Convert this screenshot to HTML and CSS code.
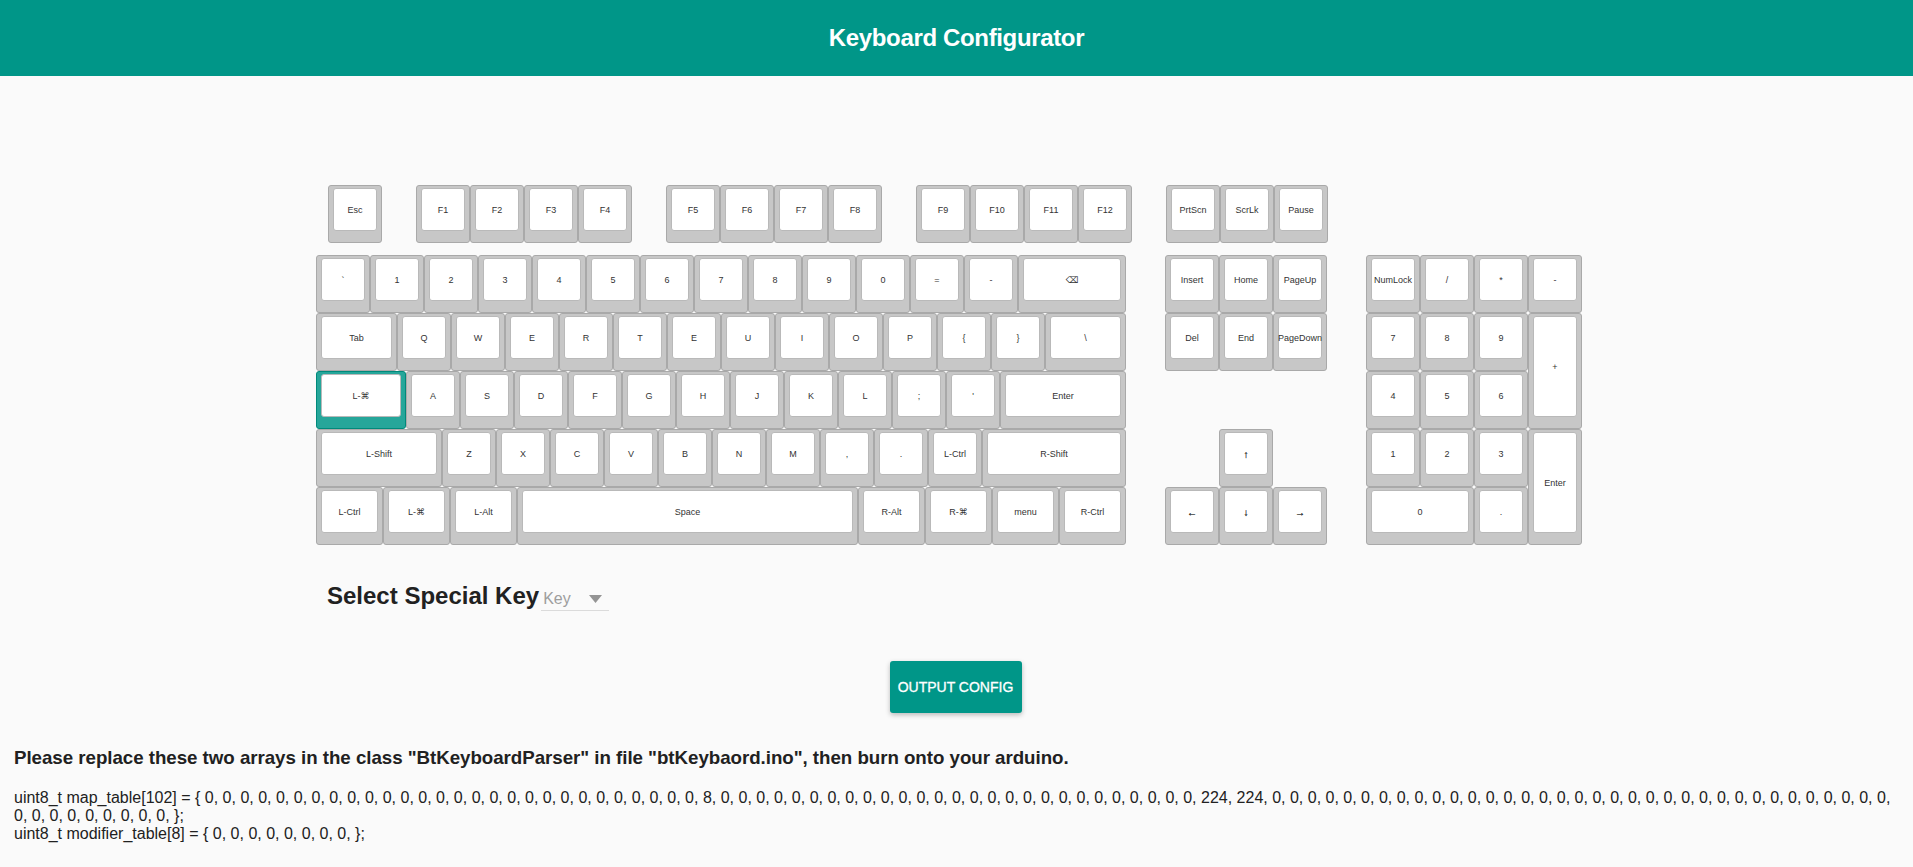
FILE: index.html
```html
<!DOCTYPE html>
<html lang="en">
<head>
<meta charset="utf-8">
<title>Keyboard Configurator</title>
<link rel="stylesheet" href="styles.css">
</head>
<body>
<header class="header"><h1 class="title">Keyboard Configurator</h1></header>
<main>
  <section class="keyboard">
    <div class="functions">
      <div class="row"><div class="key"><span>Esc</span></div></div>
      <div class="row"><div class="key"><span>F1</span></div><div class="key"><span>F2</span></div><div class="key"><span>F3</span></div><div class="key"><span>F4</span></div></div>
      <div class="row"><div class="key"><span>F5</span></div><div class="key"><span>F6</span></div><div class="key"><span>F7</span></div><div class="key"><span>F8</span></div></div>
      <div class="row"><div class="key"><span>F9</span></div><div class="key"><span>F10</span></div><div class="key"><span>F11</span></div><div class="key"><span>F12</span></div></div>
      <div class="row"><div class="key"><span>PrtScn</span></div><div class="key"><span>ScrLk</span></div><div class="key"><span>Pause</span></div></div>
    </div>
    <div class="blocks">
      <div class="main-block">
        <div class="row"><div class="key"><span>`</span></div><div class="key"><span>1</span></div><div class="key"><span>2</span></div><div class="key"><span>3</span></div><div class="key"><span>4</span></div><div class="key"><span>5</span></div><div class="key"><span>6</span></div><div class="key"><span>7</span></div><div class="key"><span>8</span></div><div class="key"><span>9</span></div><div class="key"><span>0</span></div><div class="key"><span>=</span></div><div class="key"><span>-</span></div><div class="key fill symbol"><span>⌫</span></div></div>
        <div class="row"><div class="key tab"><span>Tab</span></div><div class="key"><span>Q</span></div><div class="key"><span>W</span></div><div class="key"><span>E</span></div><div class="key"><span>R</span></div><div class="key"><span>T</span></div><div class="key"><span>E</span></div><div class="key"><span>U</span></div><div class="key"><span>I</span></div><div class="key"><span>O</span></div><div class="key"><span>P</span></div><div class="key"><span>{</span></div><div class="key"><span>}</span></div><div class="key fill"><span>\</span></div></div>
        <div class="row"><div class="key caps selected"><span>L-<i>⌘</i></span></div><div class="key"><span>A</span></div><div class="key"><span>S</span></div><div class="key"><span>D</span></div><div class="key"><span>F</span></div><div class="key"><span>G</span></div><div class="key"><span>H</span></div><div class="key"><span>J</span></div><div class="key"><span>K</span></div><div class="key"><span>L</span></div><div class="key"><span>;</span></div><div class="key"><span>'</span></div><div class="key fill"><span>Enter</span></div></div>
        <div class="row"><div class="key shift"><span>L-Shift</span></div><div class="key"><span>Z</span></div><div class="key"><span>X</span></div><div class="key"><span>C</span></div><div class="key"><span>V</span></div><div class="key"><span>B</span></div><div class="key"><span>N</span></div><div class="key"><span>M</span></div><div class="key"><span>,</span></div><div class="key"><span>.</span></div><div class="key"><span>L-Ctrl</span></div><div class="key fill"><span>R-Shift</span></div></div>
        <div class="row"><div class="key mod"><span>L-Ctrl</span></div><div class="key mod"><span>L-<i>⌘</i></span></div><div class="key mod"><span>L-Alt</span></div><div class="key fill"><span>Space</span></div><div class="key mod"><span>R-Alt</span></div><div class="key mod"><span>R-<i>⌘</i></span></div><div class="key mod"><span>menu</span></div><div class="key mod"><span>R-Ctrl</span></div></div>
      </div>
      <div class="nav-block">
        <div class="row"><div class="key"><span>Insert</span></div><div class="key"><span>Home</span></div><div class="key"><span>PageUp</span></div></div>
        <div class="row"><div class="key"><span>Del</span></div><div class="key"><span>End</span></div><div class="key"><span>PageDown</span></div></div>
        <div class="arrows">
          <div class="row center"><div class="key arrow"><span>↑</span></div></div>
          <div class="row"><div class="key arrow"><span>←</span></div><div class="key arrow"><span>↓</span></div><div class="key arrow"><span>→</span></div></div>
        </div>
      </div>
      <div class="num-block">
        <div class="key"><span>NumLock</span></div><div class="key"><span>/</span></div><div class="key"><span>*</span></div><div class="key"><span>-</span></div>
        <div class="key"><span>7</span></div><div class="key"><span>8</span></div><div class="key"><span>9</span></div><div class="key tall"><span>+</span></div>
        <div class="key"><span>4</span></div><div class="key"><span>5</span></div><div class="key"><span>6</span></div>
        <div class="key"><span>1</span></div><div class="key"><span>2</span></div><div class="key"><span>3</span></div><div class="key tall"><span>Enter</span></div>
        <div class="key wide"><span>0</span></div><div class="key"><span>.</span></div>
      </div>
    </div>
  </section>
  <section class="special">
    <h2 class="special-title">Select Special Key</h2>
    <div class="select"><span>Key</span><svg class="caret" width="13" height="8" viewBox="0 0 13 8"><path d="M0 0h13L6.5 8z" fill="#949494"/></svg></div>
  </section>
  <div class="action"><button class="button" type="button">OUTPUT CONFIG</button></div>
  <section class="output">
    <h3 class="hint">Please replace these two arrays in the class "BtKeyboardParser" in file "btKeybaord.ino", then burn onto your arduino.</h3>
    <p class="code">uint8_t map_table[102] = { 0, 0, 0, 0, 0, 0, 0, 0, 0, 0, 0, 0, 0, 0, 0, 0, 0, 0, 0, 0, 0, 0, 0, 0, 0, 0, 0, 0, 8, 0, 0, 0, 0, 0, 0, 0, 0, 0, 0, 0, 0, 0, 0, 0, 0, 0, 0, 0, 0, 0, 0, 0, 0, 0, 0, 0, 224, 224, 0, 0, 0, 0, 0, 0, 0, 0, 0, 0, 0, 0, 0, 0, 0, 0, 0, 0, 0, 0, 0, 0, 0, 0, 0, 0, 0, 0, 0, 0, 0, 0, 0, 0, 0, 0, 0, 0, 0, 0, 0, 0, 0, 0, };</p>
    <p class="code">uint8_t modifier_table[8] = { 0, 0, 0, 0, 0, 0, 0, 0, };</p>
  </section>
</main>
</body>
</html>
```
FILE: styles.css
```css
* { box-sizing: border-box; }
body { margin: 0; background: #fafafa; color: #212121; font-family: "Liberation Sans", Arial, sans-serif; font-size: 16px; }
h1, h2, h3, p { margin: 0; }

.header { height: 76px; display: flex; align-items: center; justify-content: center; background: #009688; }
.title { color: #fff; font-size: 24px; line-height: 28px; letter-spacing: -0.35px; }

.keyboard { width: 1266px; margin: 109px 0 0 316px; }
.row { display: flex; }
.functions { display: flex; margin-left: 12px; }
.functions .row + .row { margin-left: 34px; }
.blocks { display: flex; margin-top: 12px; }
.main-block { width: 810px; margin-right: 39px; }
.nav-block { width: 162px; margin-right: 39px; }
.num-block { display: grid; grid-template-columns: repeat(4, 54px); grid-auto-rows: 58px; }
.arrows { margin-top: 58px; }
.center { justify-content: center; }

.key { display: flex; flex: none; width: 54px; height: 58px; padding: 2px 4px 11px; border: 1px solid #a9a9a9; border-radius: 3px; background: #c7c7c7; }
.key span { flex: 1; min-width: 0; display: flex; align-items: center; justify-content: center; padding-top: 1px; border: 1px solid #b9b9b9; border-radius: 3px; background: #fff; color: #333; font-size: 9px; line-height: 11px; white-space: nowrap; }
.key i { font: 9px/9px "DejaVu Sans", sans-serif; }
.symbol span { font-family: "DejaVu Sans", sans-serif; }
.arrow span { color: #111; font-size: 10px; -webkit-text-stroke: 0.2px #111; }
.fill { flex: 1; width: auto; }
.tab { width: 81px; }
.caps { width: 90px; }
.shift { width: 126px; }
.mod { width: 67px; }
.tall { grid-row: span 2; height: 116px; }
.wide { grid-column: span 2; width: 108px; }
.selected { border-color: #00897b; background: #26a69a; }

.special { display: flex; margin: 37px 0 0 327px; height: 29px; }
.special-title { font-size: 24px; line-height: 28px; }
.select { display: flex; align-items: center; justify-content: space-between; width: 68px; height: 29px; margin-left: 2px; padding: 6px 7px 0 2px; border-bottom: 1px solid #dbdbdb; color: #9e9e9e; }

.action { display: flex; justify-content: center; margin-top: 50px; padding-right: 2px; }
.button { width: 132px; height: 52px; padding: 0; border: 0; border-radius: 3px; background: #009688; color: #fff; font: 14px "Liberation Sans", Arial, sans-serif; -webkit-text-stroke: 0.3px #fff; white-space: nowrap; box-shadow: 0 2px 5px rgba(0, 0, 0, .26); }

.output { margin: 34px 14px 0; }
.hint { margin-bottom: 20px; font-size: 18.72px; line-height: 22px; letter-spacing: -0.03px; }
.code { line-height: 18px; }
```
